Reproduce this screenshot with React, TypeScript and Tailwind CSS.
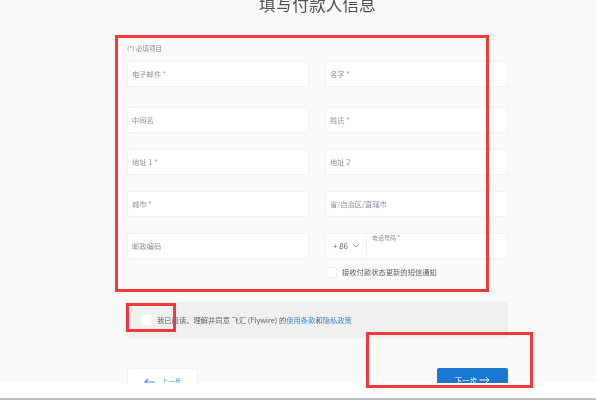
const font = { fontFamily: '"Noto Sans CJK SC", "Liberation Sans", sans-serif' };

function Field({ label, className = "" }: { label: string; className?: string }) {
  return (
    <div className={`flex h-[26px] items-center rounded-[2px] border border-[#f0f2f4] bg-white pl-[4px] text-[7.3px] text-[#8a929a] ${className}`}>
      {label}
    </div>
  );
}

function Marker({ className }: { className: string }) {
  return <div className={`absolute border-[3px] border-[#f33a3a] ${className}`} />;
}

export default function App() {
  return (
    <div className="relative h-[400px] w-[596px] overflow-hidden bg-white" style={font}>
      <div className="h-[383px] overflow-hidden bg-[#fafafa] blur-[0.35px]">
        <h1 className="mt-[-8px] ml-[259px] text-[16.7px] leading-[24px] font-normal text-[#4c5257]">填写付款人信息</h1>

        <div className="mt-[27px] ml-[127px] w-[381px]">
          <p className="text-[6.5px] leading-[10px] text-[#8a8f94]">(*) 必填项目</p>

          <div className="mt-[8px] grid grid-cols-[182px_183px] gap-x-4">
            <Field label="电子邮件 *" />
            <Field label="名字 *" />
            <Field label="中间名" className="mt-5" />
            <Field label="姓氏 *" className="mt-5" />
            <Field label="地址 1 *" className="mt-[16px]" />
            <Field label="地址 2" className="mt-[16px]" />
            <Field label="城市 *" className="mt-[16px]" />
            <Field label="省/自治区/直辖市" className="mt-[16px]" />
            <Field label="邮政编码" className="mt-[16px]" />
            <div className="mt-[16px] flex h-[26px] rounded-[2px] border border-[#f0f2f4] bg-white text-[#8a929a]">
              <div className="flex w-[41px] items-center justify-center gap-[5px] border-r border-[#eef2f6] text-[8px] text-[#5f666c]">
                <span>+ 86</span>
                <svg width="6" height="4" viewBox="0 0 6 4" fill="none" stroke="#7c848a" strokeWidth="0.8"><path d="M0.5 0.5 3 3 5.5 0.5" /></svg>
              </div>
              <span className="pt-[1px] pl-[5px] text-[6px] leading-[6px]">电话号码 *</span>
            </div>
          </div>

          <div className="mt-[8px] ml-[199px] flex items-center gap-[5px]">
            <div className="h-[11px] w-[11px] rounded-[2px] border border-[#eef0f2] bg-white" />
            <span className="text-[7.3px] leading-[11px] text-[#5c6268]">接收付款状态更新的短信通知</span>
          </div>

          <div className="mt-[24px] flex h-[36px] items-center rounded-[1px] bg-[#f0f0f0] pl-[14px]">
            <div className="h-[10px] w-[10px] bg-white" />
            <span className="ml-[6px] text-[7.3px] text-[#5c6268]">
              我已阅读、理解并同意 飞汇 (Flywire) 的<span className="text-[#3f8fd8]">使用条款</span>和<span className="text-[#3f8fd8]">隐私政策</span>
            </span>
          </div>

          <div className="mt-[30px] flex justify-between">
            <button className="flex h-[30px] w-[71px] items-start justify-center gap-[7px] rounded-[2px] border border-[#eef0f2] bg-white pt-[8px] text-[6.5px] text-[#3f8fd8]">
              <svg className="mt-[1px]" width="11" height="8" viewBox="0 0 11 8" fill="none" stroke="#3f8fd8" strokeWidth="1.2"><path d="M10.5 4H1M4 1 1 4l3 3" /></svg>
              <span>上一步</span>
            </button>
            <button className="flex h-[30px] w-[71px] items-start justify-center gap-[2px] rounded-[2px] bg-[#1878d0] pt-[7px] text-[7.5px] text-white">
              <span>下一步</span>
              <svg className="mt-[1px]" width="11" height="8" viewBox="0 0 11 8" fill="none" stroke="#fff" strokeWidth="1"><path d="M0.5 4H10M7 1l3 3-3 3" /></svg>
            </button>
          </div>
        </div>
      </div>

      <div className="absolute right-0 bottom-0 left-0 h-[2px] bg-[#bdbdbd]" />

      <Marker className="top-[35px] left-[115px] h-[257px] w-[374px]" />
      <Marker className="top-[303px] left-[126px] h-[29px] w-[50px]" />
      <Marker className="top-[332px] left-[366px] h-[56px] w-[167px]" />
    </div>
  );
}
